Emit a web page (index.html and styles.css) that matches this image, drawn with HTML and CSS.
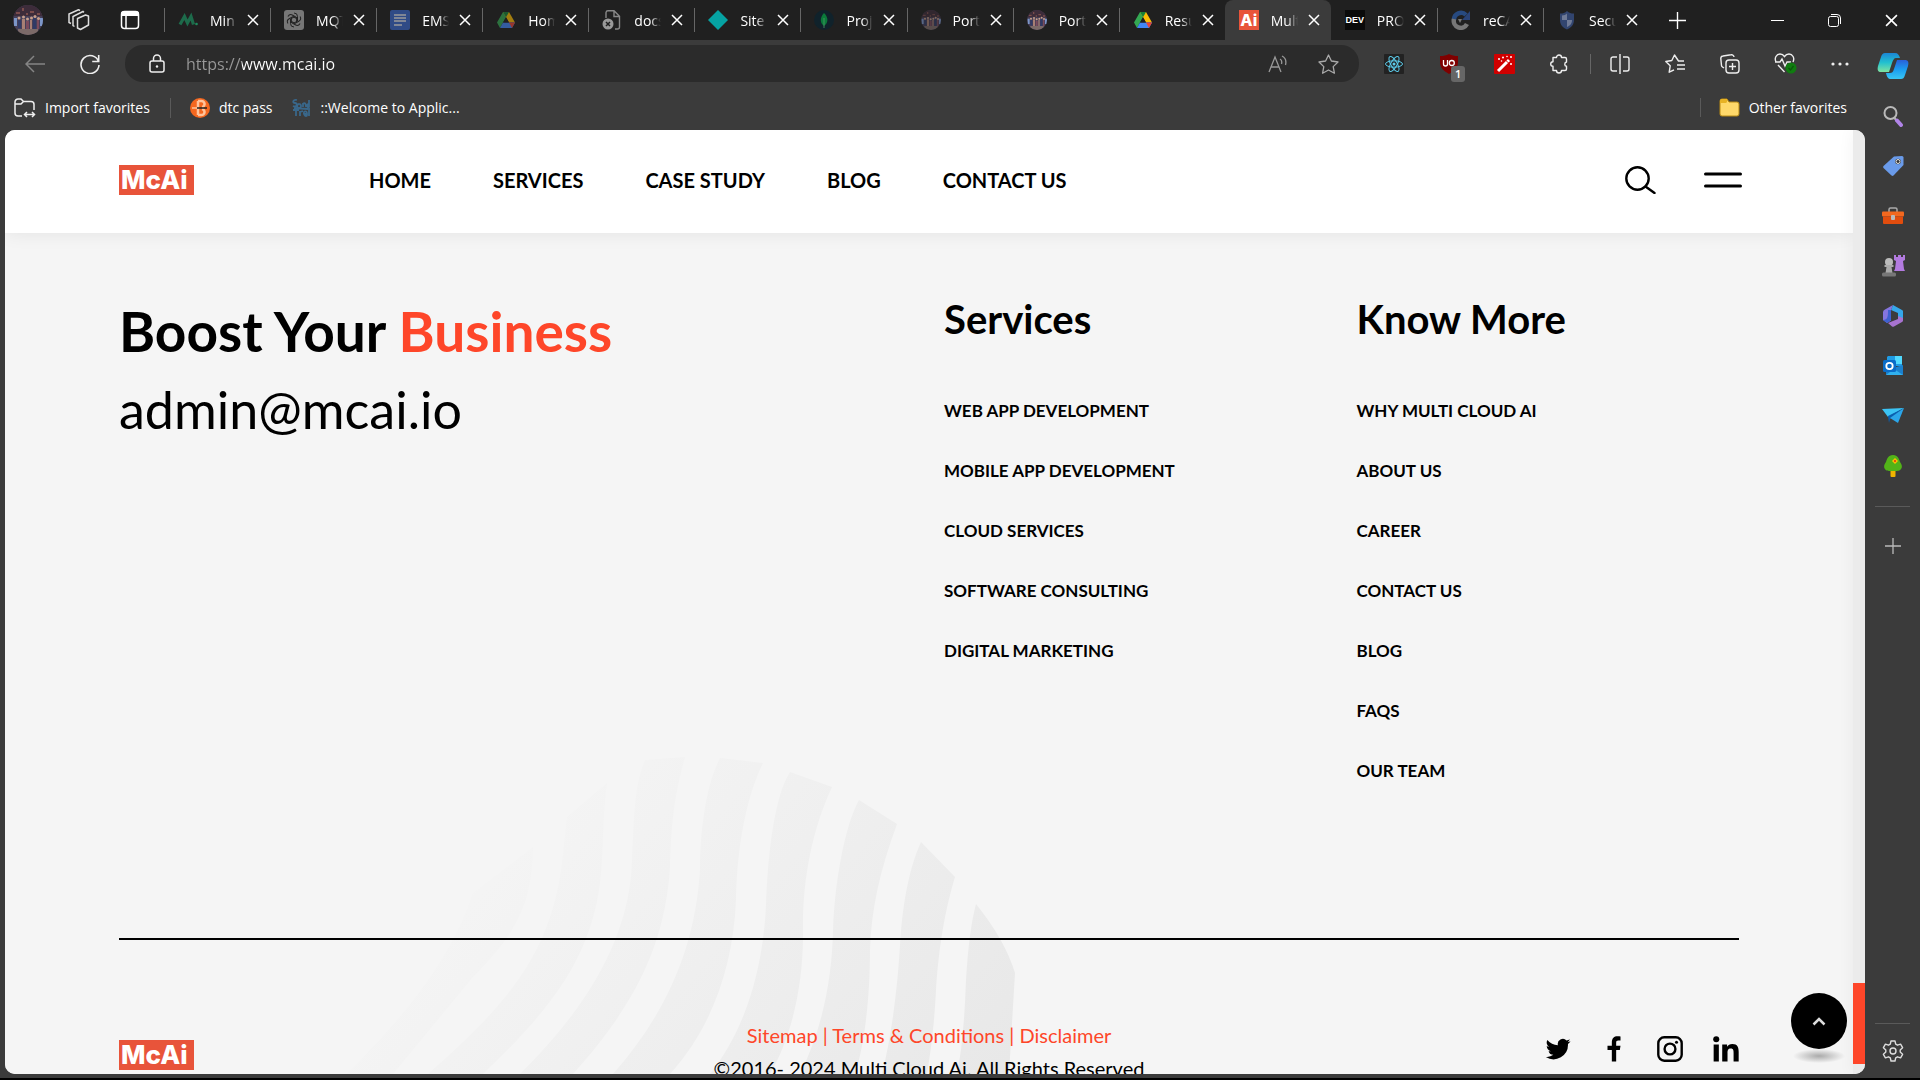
FILE: index.html
```html
<!DOCTYPE html>
<html lang="en">
<head>
  <meta charset="UTF-8">
  <meta name="viewport" content="width=device-width, initial-scale=1.0">
  <title>Multi Cloud Ai</title>
  <link rel="stylesheet" href="styles.css">
</head>
<body>
  <!-- shared icons -->
  <svg class="defs" width="0" height="0" aria-hidden="true">
    <symbol id="i-close" viewBox="0 0 12 12"><path d="M1 1l10 10M11 1L1 11" fill="none" stroke="currentColor" stroke-width="1.5"/></symbol>
    <symbol id="i-plus" viewBox="0 0 16 16"><path d="M8 0v16M0 8h16" fill="none" stroke="currentColor" stroke-width="1.3"/></symbol>
    <symbol id="i-photo" viewBox="0 0 30 30">
      <clipPath id="round"><circle cx="15" cy="15" r="15"/></clipPath>
      <g clip-path="url(#round)">
        <rect width="30" height="30" fill="#463f58"/>
        <path d="M0 0h30v11H0z" fill="#3d2c3a"/>
        <path d="M3 7h4v2H3zM9 3h2v3H9zM17 6h4v2h-4zM24 8h3v2h-3zM13 8h2v2h-2z" fill="#7a4c4c"/>
        <path d="M1 13h3v8H1zM27 13h3v8h-3z" fill="#7c96c8"/>
        <path d="M5 15h3v8H5zM20 13h3v11h-3z" fill="#303a66"/>
        <path d="M9 14h3v11H9zM17 15h2v10h-2z" fill="#a77f74"/>
        <path d="M13 16h3v11h-3zM24 15h2v9h-2z" fill="#7a4a5c"/>
        <g fill="#c79f8c"><circle cx="6" cy="13" r="1.5"/><circle cx="10.500" cy="12" r="1.500"/><circle cx="14.500" cy="14" r="1.500"/><circle cx="18.500" cy="13" r="1.500"/><circle cx="22" cy="11.500" r="1.500"/><circle cx="25.500" cy="13.500" r="1.500"/></g>
        <path d="M5 24h20v6H5z" fill="#7c6a68"/>
      </g>
    </symbol>
    <symbol id="i-drive" viewBox="0 0 18 16">
      <path d="M6 0h6L6 10.500 3 16 0 10.500z" fill="#34a853"/>
      <path d="M6 0h6l6 10.500h-6z" fill="#fbbc04"/>
      <path d="M6 0h6L9 5.300z" fill="#188038"/>
      <path d="M6 10.500h12L15 16H3z" fill="#4285f4"/>
      <path d="M12 10.500h6L15 16z" fill="#ea4335"/>
      <path d="M9 5.300l3 5.200H6z" fill="#202020"/>
    </symbol>
  </svg>

  <div class="tabstrip">
    <div class="tab-tools">
      <button aria-label="Profile"><svg width="30" height="30"><use href="#i-photo"/></svg></button>
      <button aria-label="Workspaces"><svg width="22" height="22" viewBox="0 0 22 22" fill="none" stroke="#ddd" stroke-width="1.500"><path d="M9.500 9.500l8-3.500 3 1v9l-8 4.500-3-1.500z" stroke-linejoin="round"/><path d="M6.500 17.500l-1.500-1V7.500L15 2.500l1 .8M3 14.500l-2-1V5l9.500-4.300 1.500.8"/></svg></button>
      <button aria-label="Tab actions"><svg width="20" height="20" viewBox="0 0 20 20"><rect x="1.500" y="1.500" width="17" height="17" rx="3" fill="none" stroke="#fff" stroke-width="1.500"/><path d="M1 6V4a3 3 0 0 1 3-3h12a3 3 0 0 1 3 3v2z" fill="#fff"/><path d="M6 6v13" stroke="#fff" stroke-width="1.500"/></svg></button>
    </div>
    <div class="tabs">
      <div class="tab"><svg class="fav" viewBox="0 0 20 20"><path d="M2 14.500L6.500 6.500l3 6.500 3.500-6.500 2.500 8" fill="none" stroke="#1d6b4b" stroke-width="3.200"/><circle cx="18.500" cy="14" r="1.300" fill="#1d8b5b"/></svg><span>Min</span><button aria-label="Close tab"><svg><use href="#i-close"/></svg></button></div>
      <div class="tab"><svg class="fav" viewBox="0 0 20 20"><rect width="20" height="20" rx="3" fill="#777"/><g fill="none" stroke="#222" stroke-width="1"><path d="M10 3a3.500 3.500 0 0 1 3.500 3.500V11L10 13" id="knot"/><use href="#knot" transform="rotate(60 10 10)"/><use href="#knot" transform="rotate(120 10 10)"/><use href="#knot" transform="rotate(180 10 10)"/><use href="#knot" transform="rotate(240 10 10)"/><use href="#knot" transform="rotate(300 10 10)"/></g></svg><span>MQT</span><button aria-label="Close tab"><svg><use href="#i-close"/></svg></button></div>
      <div class="tab"><svg class="fav" viewBox="0 0 20 20"><rect width="20" height="20" rx="2" fill="#2f4b86"/><path d="M4 5h12M4 8h12M4 11h12M4 15h8" stroke="#9a9a9a" stroke-width="1.500"/></svg><span>EMS</span><button aria-label="Close tab"><svg><use href="#i-close"/></svg></button></div>
      <div class="tab"><svg class="fav dim"><use href="#i-drive" x="1" y="2" width="18" height="16"/></svg><span>Hom</span><button aria-label="Close tab"><svg><use href="#i-close"/></svg></button></div>
      <div class="tab"><svg class="fav" viewBox="0 0 20 20"><path d="M4 8V2.500A2 2 0 0 1 6 .8h6l5.500 5.500V17a2 2 0 0 1-2 2H13M12 1v5.500h5.500" fill="none" stroke="#888" stroke-width="1.400"/><circle cx="6" cy="14" r="5.500" fill="#999"/><path d="M4 12l4 4M8 12l-4 4" stroke="#202020" stroke-width="1.500"/></svg><span>docs</span><button aria-label="Close tab"><svg><use href="#i-close"/></svg></button></div>
      <div class="tab"><svg class="fav" viewBox="0 0 20 20"><path d="M10 0l10 10-10 10L0 10z" fill="#06a3a3"/></svg><span>Site</span><button aria-label="Close tab"><svg><use href="#i-close"/></svg></button></div>
      <div class="tab"><svg class="fav" viewBox="0 0 20 20"><circle cx="10" cy="10" r="10" fill="#10222b"/><path d="M10 3c5 5 4 10 0 13-4-3-4.500-8 0-13z" fill="#0b7a3a"/><path d="M10 8v10" stroke="#4f9a68" stroke-width=".8"/></svg><span>Proj</span><button aria-label="Close tab"><svg><use href="#i-close"/></svg></button></div>
      <div class="tab"><svg class="fav dim"><use href="#i-photo" width="20" height="20"/></svg><span>Portf</span><button aria-label="Close tab"><svg><use href="#i-close"/></svg></button></div>
      <div class="tab"><svg class="fav"><use href="#i-photo" width="20" height="20"/></svg><span>Portf</span><button aria-label="Close tab"><svg><use href="#i-close"/></svg></button></div>
      <div class="tab"><svg class="fav"><use href="#i-drive" x="1" y="2" width="18" height="16"/></svg><span>Resu</span><button aria-label="Close tab"><svg><use href="#i-close"/></svg></button></div>
      <div class="tab active"><b class="fav fav-ai">Ai</b><span>Mult</span><button aria-label="Close tab"><svg><use href="#i-close"/></svg></button></div>
      <div class="tab first-after"><b class="fav fav-dev">DEV</b><span>PRO</span><button aria-label="Close tab"><svg><use href="#i-close"/></svg></button></div>
      <div class="tab"><svg class="fav" viewBox="0 0 20 20" fill="none" stroke-width="4.500"><path d="M3 10a7 7 0 0 1 12-5" stroke="#274a80"/><path d="M19 1v9h-8z" fill="#2a4478"/><path d="M3 9a7 7 0 0 0 13 5" stroke="#777"/><path d="M7 9l4 0-2 4z" fill="#777"/></svg><span>reCA</span><button aria-label="Close tab"><svg><use href="#i-close"/></svg></button></div>
      <div class="tab"><svg class="fav" viewBox="0 0 20 20"><path d="M10 1c2 2 4 2.500 7 2.500V10c0 5-3 7.500-7 9.500-4-2-7-4.500-7-9.500V3.500C6 3.500 8 3 10 1z" fill="#32456f"/><path d="M10 3.500V10H5V5.500c2 0 4-1 5-2zM10 10h5c0 4-2 5.500-5 7z" fill="#6f7a96"/></svg><span>Secu</span><button aria-label="Close tab"><svg><use href="#i-close"/></svg></button></div>
    </div>
    <button class="new-tab" aria-label="New tab"><svg width="17" height="17"><use href="#i-plus"/></svg></button>
    <div class="window-buttons">
      <button aria-label="Minimize"><svg width="13" height="13" viewBox="0 0 13 13"><path d="M0 6.500h13" stroke="#fff"/></svg></button>
      <button aria-label="Restore"><svg width="13" height="13" viewBox="0 0 13 13" fill="none" stroke="#fff"><rect x=".5" y="2.500" width="10" height="10" rx="2"/><path d="M3 .5h6a3.500 3.500 0 0 1 3.500 3.500v6"/></svg></button>
      <button aria-label="Close"><svg width="13" height="13"><use href="#i-close"/></svg></button>
    </div>
  </div>

  <div class="browser">
    <div class="main-col">
      <div class="toolbar">
        <button class="tool" aria-label="Back"><svg width="20" height="18" viewBox="0 0 20 18" fill="none" stroke="#858585" stroke-width="1.500"><path d="M20 9H1M9 1L1 9l8 8"/></svg></button>
        <button class="tool" aria-label="Refresh"><svg width="20" height="20" viewBox="0 0 20 20" fill="none" stroke="#eee" stroke-width="1.600"><path d="M18.500 7.500A9 9 0 1 0 19 11M18.700 1v6.500h-6.500"/></svg></button>
        <form class="omnibox">
          <svg width="16" height="19" viewBox="0 0 16 19" fill="none" stroke="#eee" stroke-width="1.500"><rect x="1" y="7" width="14" height="11" rx="2"/><path d="M4.500 7V4.500a3.500 3.500 0 0 1 7 0V7"/><circle cx="8" cy="12.500" r="1.200" fill="#eee" stroke="none"/></svg>
          <input type="text" aria-label="Address" value="https://www.mcai.io">
          <button type="button" aria-label="Read aloud"><svg width="20" height="18" viewBox="0 0 20 18" fill="none" stroke="#999" stroke-width="1.300"><path d="M1 17L7 2l6 15M3 12h8M12 4c2 1 2 3 1.500 5M14 1c4 2 4.500 5 3.500 9"/></svg></button>
          <button type="button" aria-label="Add to favorites"><svg width="21" height="20" viewBox="0 0 21 20" fill="none" stroke="#aaa" stroke-width="1.300"><path d="M10.500 1l2.900 6 6.600 1-4.800 4.600 1.200 6.600-5.900-3.200-5.900 3.200 1.200-6.600L1 8l6.600-1z" stroke-linejoin="round"/></svg></button>
        </form>
        <div class="tool-group">
          <button class="tool" aria-label="React Developer Tools"><svg width="20" height="20" viewBox="0 0 20 20"><rect width="20" height="20" rx="1" fill="#222"/><g fill="none" stroke="#5ccbea" stroke-width="1"><ellipse cx="10" cy="10" rx="8.500" ry="3.200"/><ellipse cx="10" cy="10" rx="8.500" ry="3.200" transform="rotate(60 10 10)"/><ellipse cx="10" cy="10" rx="8.500" ry="3.200" transform="rotate(120 10 10)"/></g><circle cx="10" cy="10" r="1.500" fill="#5ccbea"/></svg></button>
          <button class="tool" aria-label="uBlock Origin"><svg width="20" height="20" viewBox="0 0 20 20"><path d="M10 0c3 1.500 5 2 9 2v6c0 6-4 9-9 12C5 17 1 14 1 8V2c4 0 6-.5 9-2z" fill="#800000"/><path d="M4.500 6v4a2 2 0 0 0 4 0V6" fill="none" stroke="#fff" stroke-width="1.300"/><circle cx="12.800" cy="9" r="2.500" fill="none" stroke="#fff" stroke-width="1.300"/></svg><span class="count">1</span></button>
          <button class="tool" aria-label="Magic wand"><svg width="21" height="20" viewBox="0 0 21 20"><rect width="21" height="20" rx="1" fill="#d00000"/><path d="M4 17l9-9" stroke="#fff" stroke-width="3"/><path d="M13.500 7.500l1.500-1.500" stroke="#fff" stroke-width="3"/><g fill="#fff"><circle cx="5" cy="5" r="1"/><circle cx="9" cy="3.500" r="1"/><circle cx="17" cy="3" r="1"/><circle cx="17" cy="10" r="1"/><circle cx="13" cy="2.500" r=".8"/><circle cx="7.500" cy="7" r=".8"/></g></svg></button>
          <button class="tool" aria-label="Extensions"><svg width="20" height="20" viewBox="0 0 20 20" fill="none" stroke="#eee" stroke-width="1.400"><path d="M4 3.500h3.500a2.500 2.500 0 0 1 5 0H16a1.500 1.500 0 0 1 1.500 1.500v3a2.200 2.200 0 0 0 0 4.300V15a1.500 1.500 0 0 1-1.500 1.500h-3.500a2.500 2.500 0 0 1-5 0H4V12.300a2.300 2.300 0 0 1 0-4.600V3.500z" stroke-linejoin="round"/></svg></button>
        </div>
        <div class="tool-group divided">
          <button class="tool" aria-label="Split screen"><svg width="20" height="20" viewBox="0 0 20 20" fill="none" stroke="#eee" stroke-width="1.400"><path d="M7 3H3a2 2 0 0 0-2 2v10a2 2 0 0 0 2 2h4M13 3h4a2 2 0 0 1 2 2v10a2 2 0 0 1-2 2h-4M10 0v20"/></svg></button>
          <button class="tool" aria-label="Favorites"><svg width="21" height="20" viewBox="0 0 21 20" fill="none" stroke="#eee" stroke-width="1.400"><path d="M19 7h-5.500L9.500 1 6.800 6.500.8 7.500l4.400 4.300-1 6.400 4.800-2.400M12 11h8M12 15h8" stroke-linejoin="round"/></svg></button>
          <button class="tool" aria-label="Collections"><svg width="20" height="20" viewBox="0 0 20 20" fill="none" stroke="#eee" stroke-width="1.400"><rect x="6" y="6" width="13" height="13" rx="3"/><path d="M12.500 9v7M9 12.500h7M4 14l-1.500-1a2 2 0 0 1-1-1.500l-.7-7A2.500 2.500 0 0 1 3 2l8-1.200a2.500 2.500 0 0 1 3 2.200"/></svg></button>
          <button class="tool" aria-label="Browser essentials"><svg width="23" height="21" viewBox="0 0 23 21" fill="none" stroke="#eee" stroke-width="1.400"><path d="M2 9C0 5 2.500 1 6 1c2 0 3.500 1 4.500 2.500C11.500 2 13 1 15 1c3.500 0 6 4 4 8M4 12l6.500 7M1 9h5l2-3 3 7 2-4h4"/><circle cx="17" cy="15" r="5.500" fill="#107c10" stroke="none"/><path d="M14.500 15l2 2 3-4" stroke="#0b5a0b"/></svg></button>
          <button class="tool" aria-label="Settings and more"><svg width="18" height="4" viewBox="0 0 18 4" fill="#eee"><circle cx="2" cy="2" r="1.600"/><circle cx="9" cy="2" r="1.600"/><circle cx="16" cy="2" r="1.600"/></svg></button>
        </div>
      </div>

      <div class="favbar">
        <a href="#" class="import"><svg width="22" height="20" viewBox="0 0 22 20" fill="none" stroke="#eee" stroke-width="1.500"><path d="M8 18H4a3 3 0 0 1-3-3V4a3 3 0 0 1 3-3h3l2.500 2.500H17a3 3 0 0 1 3 3V12M1 6h6l2.500-2.500M11 16.500h9M13 14l-2.500 2.500L13 19M18 14l2.500 2.500L18 19"/></svg>Import favorites</a>
        <a href="#" class="fav-link"><svg width="20" height="20" viewBox="0 0 20 20"><circle cx="10" cy="10" r="10" fill="#f4671f"/><path d="M8 3h3a3 3 0 0 1 1 6M8 17h3a3 3 0 0 0 1-6M8 3v14" fill="none" stroke="#ffc49c" stroke-width="2.500"/><path d="M2 10h5" stroke="#ffc49c" stroke-width="1.500"/><path d="M7 10h10" stroke="#222" stroke-width="1.500"/></svg>dtc pass</a>
        <a href="#" class="fav-link"><svg width="20" height="20" viewBox="0 0 20 20" fill="none" stroke="#39678a" stroke-width="1.800"><path d="M6 2C2 1 1 5 4 5s2 5-2 3M8 6a2 2 0 1 0 .1 0M12 5v4M12 6c2-2 3 0 3 3M18 2v7c-2 1-3-3 0-3M2 12h6M5 10v8M9 13v5M9 14l3-1M13 16h3c0-4-4-3-3 0s3 2 3 1M18 10v8M3 10l14 1"/></svg>::Welcome to Applic...</a>
        <a href="#" class="other"><svg width="21" height="19" viewBox="0 0 21 19"><path d="M1 3a2 2 0 0 1 2-2h5l2 3h8a2 2 0 0 1 2 2v10a2 2 0 0 1-2 2H3a2 2 0 0 1-2-2z" fill="#ffd96a" stroke="#b98a12"/><path d="M1 5V3a2 2 0 0 1 2-2h5v3L7 5z" fill="#e8b325"/></svg>Other favorites</a>
      </div>

      <div class="viewport">
        <div class="page">
          <header class="site-header">
            <div class="container">
              <a href="#" class="logo">McAi</a>
              <nav>
                <a href="#">HOME</a>
                <a href="#">SERVICES</a>
                <a href="#">CASE STUDY</a>
                <a href="#">BLOG</a>
                <a href="#">CONTACT US</a>
              </nav>
              <div class="header-actions">
                <button aria-label="Search"><svg width="31" height="28" viewBox="0 0 31 28" fill="none" stroke="#000" stroke-width="2.400" stroke-linecap="round"><circle cx="12.500" cy="12.500" r="11.200"/><path d="M20.500 20.500l9 6.500"/></svg></button>
                <button aria-label="Menu"><svg width="38" height="16" viewBox="0 0 38 16" stroke="#000" stroke-width="3" stroke-linecap="round"><path d="M1.500 2h35M1.500 14h35"/></svg></button>
              </div>
            </div>
          </header>

          <footer class="site-footer">
            <svg class="waves" width="680" height="324" viewBox="340 750 680 324" aria-hidden="true">
              <linearGradient id="fade" gradientUnits="userSpaceOnUse" x1="1010" y1="1060" x2="590" y2="700">
                <stop offset="0" stop-color="#e8e8e8"/>
                <stop offset="1" stop-color="#f5f5f5"/>
              </linearGradient>
              <g fill="url(#fade)">
                <path d="M976 904Q1005 940 1015 973L1009 1074H957Q964 1040 966 980Q969 930 976 904z"/>
                <path d="M921 842L955 877C942 920 938 960 936 990C934 1030 930 1055 927 1074H882C893 1030 898 980 900 945C902 910 908 870 921 842z"/>
                <path d="M859 800L897 824C880 870 871 910 870 950C870 990 866 1040 855 1074H800C822 1030 832 980 833 930C835 880 845 825 859 800z"/>
                <path d="M790 772L832 787C812 830 802 880 803 935C803 990 790 1040 770 1074H710C745 1030 763 970 766 905C768 850 775 795 790 772z"/>
                <path d="M720 758L763 763C745 800 737 850 736 900C733 970 710 1030 670 1074H613C665 1015 695 950 700 870C700 830 706 785 720 758z"/>
                <path d="M645 760L685 757C673 800 671 830 670 867C665 945 635 1005 573 1074H520C590 1005 630 935 632 860C634 820 634 785 645 760z"/>
                <path d="M567 817L607 783C602 820 604 850 600 883C590 960 550 1010 483 1074H428C500 1010 550 960 562 863z"/>
                <path d="M473 893L533 847C532 900 520 930 473 977L393 1074H347C410 1010 450 960 473 893z"/>
              </g>
            </svg>

            <div class="container">
              <div class="footer-grid">
                <div class="boost">
                  <h1>Boost Your <span>Business</span></h1>
                  <a href="#">admin@mcai.io</a>
                </div>
                <div class="footer-col">
                  <h2>Services</h2>
                  <ul>
                    <li><a href="#">WEB APP DEVELOPMENT</a></li>
                    <li><a href="#">MOBILE APP DEVELOPMENT</a></li>
                    <li><a href="#">CLOUD SERVICES</a></li>
                    <li><a href="#">SOFTWARE CONSULTING</a></li>
                    <li><a href="#">DIGITAL MARKETING</a></li>
                  </ul>
                </div>
                <div class="footer-col">
                  <h2>Know More</h2>
                  <ul>
                    <li><a href="#">WHY MULTI CLOUD AI</a></li>
                    <li><a href="#">ABOUT US</a></li>
                    <li><a href="#">CAREER</a></li>
                    <li><a href="#">CONTACT US</a></li>
                    <li><a href="#">BLOG</a></li>
                    <li><a href="#">FAQS</a></li>
                    <li><a href="#">OUR TEAM</a></li>
                  </ul>
                </div>
              </div>

              <div class="footer-bottom">
                <a href="#" class="logo">McAi</a>
                <div class="legal">
                  <p class="legal-links"><a href="#">Sitemap</a> | <a href="#">Terms &amp; Conditions</a> | <a href="#">Disclaimer</a></p>
                  <p>©2016- 2024 Multi Cloud Ai. All Rights Reserved</p>
                </div>
                <div class="social">
                  <a href="#" aria-label="Twitter"><svg width="26" height="26" viewBox="0 0 24 24"><path d="M23.600 4.900c-.8.400-1.700.7-2.700.8a4.700 4.700 0 0 0 2-2.600c-.9.500-1.900.9-3 1.100a4.700 4.700 0 0 0-8 4.300A13.300 13.300 0 0 1 2.200 3.600a4.700 4.700 0 0 0 1.500 6.300c-.8 0-1.500-.2-2.100-.6 0 2.300 1.600 4.200 3.800 4.700-.7.200-1.400.2-2.100.1a4.700 4.700 0 0 0 4.400 3.300A9.500 9.500 0 0 1 .7 19.300 13.300 13.300 0 0 0 21.200 7.400c.9-.7 1.700-1.500 2.400-2.500z"/></svg></a>
                  <a href="#" aria-label="Facebook"><svg width="26" height="26" viewBox="0 0 24 24"><path d="M10 23.500V13H6V9h4V6c0-4 2.200-5.700 5.200-5.700 1.200 0 2.200.1 2.800.2v3.700h-2c-1.600 0-2 .8-2 2V9h4l-.6 4H14v10.500z"/></svg></a>
                  <a href="#" aria-label="Instagram"><svg width="26" height="26" viewBox="0 0 24 24" fill="none" stroke="#000" stroke-width="2.200"><rect x="1.200" y="1.200" width="21.600" height="21.600" rx="5.500"/><circle cx="12" cy="12" r="5"/><circle cx="18" cy="5.800" r="1.400" fill="#000" stroke="none"/></svg></a>
                  <a href="#" aria-label="LinkedIn"><svg width="26" height="26" viewBox="0 0 24 24"><circle cx="3" cy="3" r="2.800"/><path d="M.6 7.800h4.800v15.700H.6zM8.500 7.800H13V10c.8-1.400 2.500-2.600 4.900-2.600 4.800 0 5.800 3 5.800 7.400v8.700H19v-7.700c0-2 0-4.200-2.600-4.200s-3 2-3 4.100v7.800H8.500z"/></svg></a>
                </div>
              </div>
            </div>
          </footer>
          <button class="to-top" aria-label="Back to top"><svg width="14" height="9" viewBox="0 0 14 9"><path d="M1.500 7.500L7 2l5.500 5.500" fill="none" stroke="#ddd" stroke-width="2.500"/></svg></button>
        </div>
        <div class="scrollbar"><div class="thumb"></div></div>
      </div>
    </div>

    <aside class="sidebar">
      <button class="copilot" aria-label="Copilot"><svg width="32" height="28" viewBox="0 0 32 28">
        <linearGradient id="cp1" x1="0" y1="0" x2="0" y2="1"><stop offset="0" stop-color="#1b86d6"/><stop offset=".5" stop-color="#22c0d0"/><stop offset="1" stop-color="#7fe3a0"/></linearGradient>
        <linearGradient id="cp2" x1="0" y1="0" x2="0" y2="1"><stop offset="0" stop-color="#2a5fd8"/><stop offset=".5" stop-color="#1b9df0"/><stop offset="1" stop-color="#39c6f4"/></linearGradient>
        <path d="M8 1h10c3 0 4 2 5 5h-4c-2 0-3 2-4 5l-3 9H4c-3 0-4-2-3-6L4 5c1-3 2-4 4-4z" fill="url(#cp1)"/>
        <path d="M24 27H14c-3 0-4-2-5-6h4c2 0 3-1 4-4l3-9h8c3 0 4 2 3 6l-3 9c-1 3-2 4-4 4z" fill="url(#cp2)"/>
      </svg></button>
      <button aria-label="Search"><svg width="20" height="22" viewBox="0 0 20 22" fill="none"><circle cx="7.500" cy="8" r="6" stroke="#b9b9b9" stroke-width="2"/><path d="M11.500 13l2.500 3" stroke="#b9b9b9" stroke-width="2"/><path d="M14 15.500l4 4.500" stroke="#b184e8" stroke-width="4" stroke-linecap="round"/></svg></button>
      <button aria-label="Shopping"><svg width="22" height="22" viewBox="0 0 22 22"><path d="M12 1.500L20 1a1.500 1.500 0 0 1 1.500 1.500V10L11.500 20.500a1.500 1.500 0 0 1-2 0L1.500 13a1.500 1.500 0 0 1 0-2z" fill="#6a9bea"/><circle cx="16" cy="6.500" r="2.800" fill="#333"/><circle cx="16" cy="6.500" r="2" fill="none" stroke="#e6e6e6"/></svg></button>
      <button aria-label="Tools"><svg width="22" height="18" viewBox="0 0 22 18"><path d="M7 5V2.500A1.500 1.500 0 0 1 8.500 1h5A1.500 1.500 0 0 1 15 2.500V5" fill="none" stroke="#aaa" stroke-width="1.500"/><rect y="4.500" width="22" height="5" rx="1" fill="#f2681f"/><path d="M1 9.500h20V16a1 1 0 0 1-1 1H2a1 1 0 0 1-1-1z" fill="#e14d0e"/><rect x="9" y="8" width="4" height="5" rx="1" fill="#bbb"/></svg></button>
      <button aria-label="Games"><svg width="24" height="24" viewBox="0 0 24 24"><path d="M13 1h2v2h2V1h3v2h2V1h2v5l-2 1 1 8 1 2H13l1-2 1-8-2-1z" fill="#b37be0"/><circle cx="8" cy="8" r="4" fill="#bbb"/><path d="M3.500 11h9v2h-2l1 6h-7l1-6h-2z" fill="#aaa"/><rect x="1" y="18.500" width="14" height="4" rx="1.500" fill="#777"/></svg></button>
      <button aria-label="Microsoft 365"><svg width="20" height="22" viewBox="0 0 20 22"><path d="M10 0l9 5a2 2 0 0 1 1 2v7l-5-2V8L8 5z" fill="#35a7ea"/><path d="M10 0L2 4.500A3 3 0 0 0 0 7v8l4 3 4-2.500V5z" fill="#8575df"/><path d="M8 5v10.500L4 18l-4-3c5 0 5-4 5-10z" fill="#3f60cf"/><path d="M20 13l-5-2v3l-10 4 4 3.500a2 2 0 0 0 2 0l8-4.500a2 2 0 0 0 1-2z" fill="#a773d0"/><path d="M8 8l4-1 3 3v3l-4 2-3-1z" fill="#3b3b3b"/></svg></button>
      <button aria-label="Outlook"><svg width="20" height="20" viewBox="0 0 20 20"><path d="M5 0h13a1 1 0 0 1 1 1v9H4V1z" fill="#1f9be4"/><path d="M12 0h7v8h-7z" fill="#50d9ff"/><path d="M20 9v10H3v-5z" fill="#1b80cd"/><path d="M3 19l8-6 9 6z" fill="#30b0ee"/><rect y="4" width="13" height="12" rx="1.500" fill="#0a6cc8"/><circle cx="6.500" cy="10" r="3.200" fill="none" stroke="#fff" stroke-width="1.800"/></svg></button>
      <button aria-label="Drop"><svg width="22" height="16" viewBox="0 0 22 16"><path d="M0 1l22-1L6 9z" fill="#3bc4f5"/><path d="M6 8L22 0 8 11l-1 4z" fill="#0a5fb0"/><path d="M22 0l-6 15-8-5z" fill="#2ba6ea"/></svg></button>
      <button aria-label="Tree"><svg width="20" height="22" viewBox="0 0 20 22"><rect x="7.500" y="14" width="5" height="8" rx="1" fill="#f0b400"/><path d="M10 0c5 0 6 4 7 7 4 5 1 9-3 9H6c-4 0-7-4-3-9 1-3 2-7 7-7z" fill="#52b318"/><path d="M12 3l3 3-3 3-3-3z" fill="#ffc400"/><circle cx="12" cy="6" r="1.200" fill="#e8500a"/></svg></button>
      <hr>
      <button class="add" aria-label="Customize"><svg width="16" height="16"><use href="#i-plus"/></svg></button>
      <hr class="push">
      <button aria-label="Settings"><svg width="22" height="22" viewBox="0 0 22 22" fill="none" stroke="#ddd" stroke-width="1.400" stroke-linejoin="round"><path d="M9 1h4l.7 3.200 1.800 1 3.100-1 2 3.500L18.200 10v2l2.400 2.300-2 3.500-3.100-1-1.800 1L13 21H9l-.7-3.200-1.800-1-3.100 1-2-3.500L3.800 12v-2L1.400 7.700l2-3.500 3.100 1 1.800-1z"/><circle cx="11" cy="11" r="3"/></svg></button>
    </aside>
  </div>
</body>
</html>
```

FILE: styles.css
```css
* {
  box-sizing: border-box;
  margin: 0;
  padding: 0;
}

body {
  height: 100vh;
  display: flex;
  flex-direction: column;
  overflow: hidden;
  background: #3b3b3b;
  border-bottom: 2px solid #000;
  color: #fff;
  font-family: "Open Sans", "Noto Sans", sans-serif;
  font-size: 14px;
}

button {
  border: none;
  background: none;
  color: inherit;
  font: inherit;
  cursor: pointer;
}

a {
  color: inherit;
  text-decoration: none;
}

svg {
  display: block;
  flex-shrink: 0;
}

.defs {
  position: absolute;
}

/* tab strip */
.tabstrip {
  display: flex;
  height: 40px;
  background: #202020;
}

.tab-tools {
  display: flex;
  width: 164px;
  padding-left: 2px;
}

.tab-tools button {
  width: 51px;
  display: flex;
  align-items: center;
  justify-content: center;
}

.tabs {
  flex: 1;
  display: flex;
  min-width: 0;
}

.tab {
  flex: 1;
  min-width: 0;
  display: flex;
  align-items: center;
  padding-left: 14px;
  background: linear-gradient(#666, #666) left center / 1px 24px no-repeat;
}

.tab span {
  width: 27px;
  margin-left: 12px;
  overflow: hidden;
  white-space: nowrap;
  mask-image: linear-gradient(90deg, #000 60%, transparent);
}

.tab button {
  margin-left: 10px;
}

.tab button svg {
  width: 12px;
  height: 12px;
}

.tab.active {
  background: #3b3b3b;
  border-radius: 8px 8px 0 0;
}

.tab.first-after {
  background: none;
}

.fav {
  width: 20px;
  height: 20px;
  flex-shrink: 0;
}

.dim {
  opacity: 0.6;
}

.fav-ai,
.fav-dev {
  display: flex;
  align-items: center;
  justify-content: center;
  background: #e8543a;
  font-family: Inter, sans-serif;
  font-weight: 800;
  font-size: 16px;
}

.fav-dev {
  background: #0a0a0a;
  font-family: "Liberation Sans", sans-serif;
  font-size: 9px;
}

.new-tab {
  width: 56px;
  display: flex;
  align-items: center;
  justify-content: center;
}

.window-buttons {
  display: flex;
  margin-left: 44px;
}

.window-buttons button {
  width: 57px;
  display: flex;
  align-items: center;
  justify-content: center;
}

/* browser frame */
.browser {
  flex: 1;
  display: flex;
  min-height: 0;
}

.main-col {
  flex: 1;
  min-width: 0;
  display: flex;
  flex-direction: column;
}

.toolbar {
  display: flex;
  align-items: center;
  height: 47px;
  padding: 0 5px 0 15px;
  gap: 15px;
}

.tool {
  position: relative;
  width: 40px;
  height: 40px;
  display: flex;
  align-items: center;
  justify-content: center;
}

.tool-group {
  display: flex;
  gap: 15px;
}

.divided {
  margin-left: -4px;
  padding-left: 10px;
  background: linear-gradient(#666, #666) left center / 1px 20px no-repeat;
}

.count {
  position: absolute;
  left: 22px;
  top: 22px;
  padding: 0 4px;
  border-radius: 3px;
  background: #666;
  font-size: 11px;
  line-height: 16px;
  font-weight: 600;
}

.omnibox {
  flex: 1;
  display: flex;
  align-items: center;
  height: 37px;
  padding: 0 6px 0 24px;
  border-radius: 18px;
  background: #2b2b2b;
}

.omnibox input {
  flex: 1;
  margin-left: 21px;
  border: none;
  outline: none;
  font: 16px "Open Sans", "Noto Sans", sans-serif;
  color: transparent;
  background: linear-gradient(90deg, #999 56px, #fff 56px);
  background-clip: text;
  -webkit-background-clip: text;
}

.omnibox button {
  width: 50px;
  display: flex;
  justify-content: center;
}

.favbar {
  display: flex;
  align-items: center;
  height: 43px;
  padding: 0 18px 2px 14px;
}

.favbar a {
  display: flex;
  align-items: center;
  gap: 9px;
}

.import {
  padding-right: 20px;
  border-right: 1px solid #5a5a5a;
}

.fav-link {
  margin-left: 19px;
}

.favbar .other {
  margin-left: auto;
  padding-left: 18px;
  border-left: 1px solid #5a5a5a;
}

/* web page */
.viewport {
  flex: 1;
  min-height: 0;
  display: flex;
  margin: 0 0 4px 5px;
  border-radius: 10px;
  overflow: hidden;
  background: #f5f5f5;
  color: #000;
  font-family: Lato, sans-serif;
}

.page {
  position: relative;
  flex: 1;
  min-width: 0;
  display: flex;
  flex-direction: column;
  overflow: hidden;
}

.scrollbar {
  position: relative;
  width: 12px;
  padding-bottom: 10px;
  display: flex;
  flex-direction: column;
  justify-content: flex-end;
  background: #ebebeb;
  box-shadow: 0 0 16px rgba(0, 0, 0, 0.06);
}

.thumb {
  height: 81px;
  background: #fe4629;
}

.container {
  width: 100%;
  max-width: 1650px;
  margin: 0 auto;
  padding: 0 15px;
}

.site-header {
  position: relative;
  flex-shrink: 0;
  background: #fff;
  box-shadow: 0 0 18px rgba(0, 0, 0, 0.08);
}

.site-header .container {
  display: flex;
  align-items: center;
  height: 103px;
  padding-bottom: 3px;
}

.logo {
  display: flex;
  align-items: center;
  width: 75px;
  height: 30px;
  padding-left: 2px;
  background: #e8543a;
  color: #fff;
  font-family: Inter, sans-serif;
  font-size: 26px;
  font-weight: 800;
  line-height: 30px;
}

.site-header nav {
  display: flex;
  gap: 62px;
  margin-left: 175px;
  font-size: 20px;
  font-weight: 700;
}

.header-actions {
  display: flex;
  align-items: center;
  gap: 48px;
  margin-left: auto;
  margin-right: -3px;
}

.site-footer {
  flex: 1;
  padding-top: 56px;
  background: #f5f5f5;
}

.waves {
  position: absolute;
  left: 335px;
  bottom: 0;
}

.site-footer .container {
  position: relative;
}

.footer-grid {
  display: grid;
  grid-template-columns: 2fr 1fr 1fr;
  margin-right: -30px;
}

.boost {
  padding-top: 3px;
  font-size: 52px;
  line-height: 78px;
}

.boost h1 {
  font-size: 55px;
  font-weight: 700;
}

.boost span {
  color: #fe4629;
}

.footer-col h2 {
  margin-bottom: 32px;
  font-size: 40px;
  line-height: 60px;
  font-weight: 700;
}

.footer-col ul {
  list-style: none;
}

.footer-col li {
  font-size: 17px;
  line-height: 60px;
  font-weight: 700;
}

.footer-bottom {
  display: grid;
  grid-template-columns: 1fr auto 1fr;
  align-items: start;
  margin-top: 137px;
  padding-top: 79px;
  border-top: 2px solid #000;
}

.footer-bottom .logo {
  margin-top: 21px;
}

.legal {
  font-size: 20px;
  line-height: 33px;
  text-align: center;
}

.legal-links {
  color: #fe4629;
}

.social {
  display: flex;
  justify-content: flex-end;
  gap: 30px;
  margin-top: 17px;
}

.to-top {
  position: absolute;
  right: 6px;
  bottom: 25px;
  width: 56px;
  height: 56px;
  display: flex;
  align-items: center;
  justify-content: center;
  border-radius: 50%;
  background: #000;
}

.to-top::after {
  content: "";
  position: absolute;
  left: 2px;
  top: 56px;
  width: 52px;
  height: 14px;
  background: radial-gradient(ellipse closest-side, #aaa, transparent);
}

/* edge sidebar */
.sidebar {
  width: 55px;
  display: flex;
  flex-direction: column;
  align-items: center;
  padding-bottom: 2px;
}

.sidebar button {
  width: 55px;
  height: 50px;
  flex-shrink: 0;
  display: flex;
  align-items: center;
  justify-content: center;
}

.sidebar .copilot {
  height: 51px;
}

.sidebar .add {
  color: #bbb;
}

.sidebar hr {
  width: 35px;
  margin: 15px 0 14px;
  border: none;
  border-top: 1px solid #5a5a5a;
}

.sidebar .push {
  margin: auto 0 2px;
}
```
